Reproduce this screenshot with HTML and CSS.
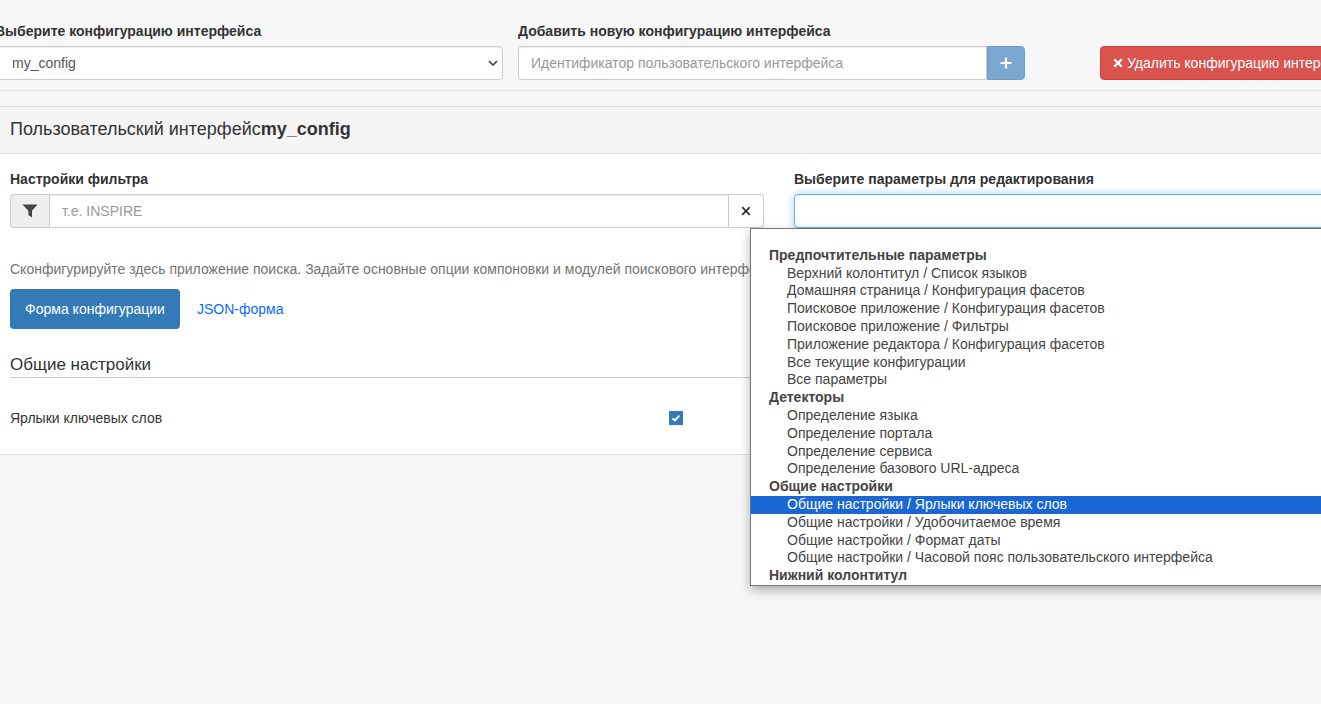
FILE: index.html
```html
<!DOCTYPE html>
<html lang="ru">
<head>
<meta charset="utf-8">
<title>Конфигурация интерфейса</title>
<link rel="stylesheet" href="styles.css">
</head>
<body>
<div class="page">
  <div class="toolbar">
    <div class="field field-select">
      <label class="label">Выберите конфигурацию интерфейса</label>
      <div class="select-box"><span>my_config</span>
        <svg class="chev" width="10" height="6" viewBox="0 0 10 6"><path d="M1 1l4 4 4-4" fill="none" stroke="#444" stroke-width="1.7"/></svg>
      </div>
    </div>
    <div class="field field-add">
      <label class="label">Добавить новую конфигурацию интерфейса</label>
      <div class="input-group">
        <div class="input add-input placeholder">Идентификатор пользовательского интерфейса</div>
        <div class="add-btn">
          <svg width="12" height="12" viewBox="0 0 12 12"><path d="M6 .5v11M.5 6h11" stroke="#fff" stroke-width="2.2" fill="none"/></svg>
        </div>
      </div>
    </div>
    <div class="delete-btn">
      <svg width="10" height="10" viewBox="0 0 10 10"><path d="M1.2 1.2l7.6 7.6M8.8 1.2L1.2 8.8" stroke="#fff" stroke-width="2.3" fill="none"/></svg>
      <span>Удалить конфигурацию интерфейса</span>
    </div>
  </div>
  <div class="rule"></div>
  <div class="panel">
    <div class="panel-heading">Пользовательский интерфейс<strong>my_config</strong></div>
    <div class="panel-body">
      <div class="two-col">
        <div class="col-filter">
          <label class="label">Настройки фильтра</label>
          <div class="filter-group">
            <div class="addon">
              <svg width="16" height="14" viewBox="0 0 16 14"><path d="M.5.5h15L10 6.8v6.7L6.4 11V6.8z" fill="#444"/></svg>
            </div>
            <div class="input filter-input placeholder">т.е. INSPIRE</div>
            <div class="clear">
              <svg width="10" height="10" viewBox="0 0 10 10"><path d="M1.2 1.2l7.6 7.6M8.8 1.2L1.2 8.8" stroke="#333" stroke-width="1.8" fill="none"/></svg>
            </div>
          </div>
        </div>
        <div class="col-params">
          <label class="label">Выберите параметры для редактирования</label>
          <div class="focus-input"></div>
        </div>
      </div>
      <p class="help">Сконфигурируйте здесь приложение поиска. Задайте основные опции компоновки и модулей поискового интерфейса.</p>
      <div class="tabs">
        <div class="tab-active">Форма конфигурации</div>
        <div class="tab-link">JSON-форма</div>
      </div>
      <h3 class="section-title">Общие настройки</h3>
      <div class="setting">
        <span class="setting-name">Ярлыки ключевых слов</span>
        <span class="checkbox">
          <svg width="10" height="10" viewBox="0 0 10 10"><path d="M1.5 5.6l2.4 1.9L8.3 2.6" stroke="#fff" stroke-width="1.9" fill="none"/></svg>
        </span>
      </div>
    </div>
  </div>
</div>
<div class="dropdown">
  <div class="group">Предпочтительные параметры</div>
  <div class="opt">Верхний колонтитул / Список языков</div>
  <div class="opt">Домашняя страница / Конфигурация фасетов</div>
  <div class="opt">Поисковое приложение / Конфигурация фасетов</div>
  <div class="opt">Поисковое приложение / Фильтры</div>
  <div class="opt">Приложение редактора / Конфигурация фасетов</div>
  <div class="opt">Все текущие конфигурации</div>
  <div class="opt">Все параметры</div>
  <div class="group">Детекторы</div>
  <div class="opt">Определение языка</div>
  <div class="opt">Определение портала</div>
  <div class="opt">Определение сервиса</div>
  <div class="opt">Определение базового URL-адреса</div>
  <div class="group">Общие настройки</div>
  <div class="opt selected">Общие настройки / Ярлыки ключевых слов</div>
  <div class="opt">Общие настройки / Удобочитаемое время</div>
  <div class="opt">Общие настройки / Формат даты</div>
  <div class="opt">Общие настройки / Часовой пояс пользовательского интерфейса</div>
  <div class="group">Нижний колонтитул</div>
</div>
</body>
</html>
```
FILE: styles.css
```css
* { box-sizing: border-box; }
html, body { margin: 0; height: 100%; overflow: hidden; }
body {
  background: #f7f7f7;
  color: #333;
  font: 14px/20px "Liberation Sans", Arial, sans-serif;
  width: 1321px;
  height: 704px;
  position: relative;
}
.page { width: 1321px; overflow: hidden; padding-top: 22px; }
.label { display: block; font-weight: 700; color: #333; height: 20px; line-height: 19px; margin-bottom: 4px; white-space: nowrap; }

.toolbar { display: flex; align-items: flex-start; margin-left: -5px; white-space: nowrap; }
.field-select { width: 508px; flex: none; }
.field-add { width: 507px; margin-left: 15px; flex: none; }

.select-box {
  height: 34px;
  background: #fff;
  border: 1px solid #ccc;
  border-radius: 4px;
  padding: 0 4px 0 16px;
  display: flex;
  align-items: center;
  justify-content: space-between;
  color: #555;
  box-shadow: inset 0 1px 1px rgba(0,0,0,.075);
}
.chev { display: block; }

.input {
  height: 34px;
  background: #fff;
  border: 1px solid #ccc;
  display: flex;
  align-items: center;
  padding: 0 12px;
  box-shadow: inset 0 1px 1px rgba(0,0,0,.075);
}
.placeholder { color: #999; }
.input-group { display: flex; }
.add-input { width: 469px; border-radius: 4px 0 0 4px; }
.add-btn {
  width: 38px;
  height: 34px;
  background: #7aa6cf;
  border: 1px solid #6f9dc8;
  border-radius: 0 4px 4px 0;
  display: flex;
  align-items: center;
  justify-content: center;
}
.delete-btn {
  margin: 24px 0 0 75px;
  height: 34px;
  background: #d9534f;
  border: 1px solid #d43f3a;
  border-radius: 4px;
  color: #fff;
  padding: 0 12px 0 12px;
  display: flex;
  align-items: center;
  gap: 4px;
  flex: none;
}

.rule { height: 1px; background: #e3e3e3; margin-top: 10px; }

.panel { margin-top: 15px; background: #fff; border-top: 1px solid #ddd; border-bottom: 1px solid #ddd; box-shadow: 0 1px 1px rgba(0,0,0,.05); }
.panel-heading {
  height: 47px;
  background: #f5f5f5;
  border-bottom: 1px solid #ddd;
  padding: 0 10px 2px;
  display: flex;
  align-items: center;
  font-size: 18px;
  color: #333;
  white-space: nowrap;
}
.panel-body { padding: 16px 0 0 10px; height: 300px; }

.two-col { display: flex; }
.col-filter { width: 754px; flex: none; }
.col-params { margin-left: 30px; flex: 1; min-width: 0; margin-right: -10px; }

.filter-group { display: flex; height: 34px; }
.addon {
  width: 39px;
  background: #eee;
  border: 1px solid #ccc;
  border-right: 0;
  border-radius: 4px 0 0 4px;
  display: flex;
  align-items: center;
  justify-content: center;
}
.filter-input { flex: 1; }
.clear {
  width: 35px;
  background: #fff;
  border: 1px solid #ccc;
  border-left: 0;
  border-radius: 0 4px 4px 0;
  display: flex;
  align-items: center;
  justify-content: center;
}
.focus-input {
  height: 34px;
  width: 560px;
  background: #fff;
  border: 1px solid #66afe9;
  border-radius: 4px;
  box-shadow: inset 0 1px 1px rgba(0,0,0,.075), 0 0 8px rgba(102,175,233,.6);
}

.help { margin: 31px 0 0; color: #737373; white-space: nowrap; height: 20px; }
.tabs { display: flex; align-items: center; margin-top: 10px; }
.tab-active {
  height: 40px;
  width: 170px;
  background: #337ab7;
  color: #fff;
  border-radius: 4px;
  display: flex;
  align-items: center;
  justify-content: center;
}
.tab-link { color: #0a6cff; margin-left: 17px; }

.section-title {
  margin: 15px 0 0;
  height: 34px;
  font-size: 17px;
  font-weight: 400;
  line-height: 42px;
  color: #333;
  border-bottom: 1px solid #ccc;
}
.setting { display: flex; align-items: center; margin-top: 30px; height: 20px; }
.setting-name { width: 659px; }
.checkbox {
  width: 14px;
  height: 14px;
  background: #337ab7;
  display: flex;
  align-items: center;
  justify-content: center;
}

.dropdown {
  position: absolute;
  left: 750px;
  top: 228px;
  width: 620px;
  height: 358px;
  background: #fff;
  border: 1px solid #767676;
  box-shadow: 0 4px 10px rgba(0,0,0,.3);
  padding-top: 17.8px;
  color: #444;
  line-height: 17.8px;
  overflow: hidden;
}
.group { padding-left: 18px; font-weight: 700; height: 17.8px; }
.opt { padding-left: 36px; height: 17.8px; white-space: nowrap; }
.selected { background: #1967d2; color: #fff; }
```
